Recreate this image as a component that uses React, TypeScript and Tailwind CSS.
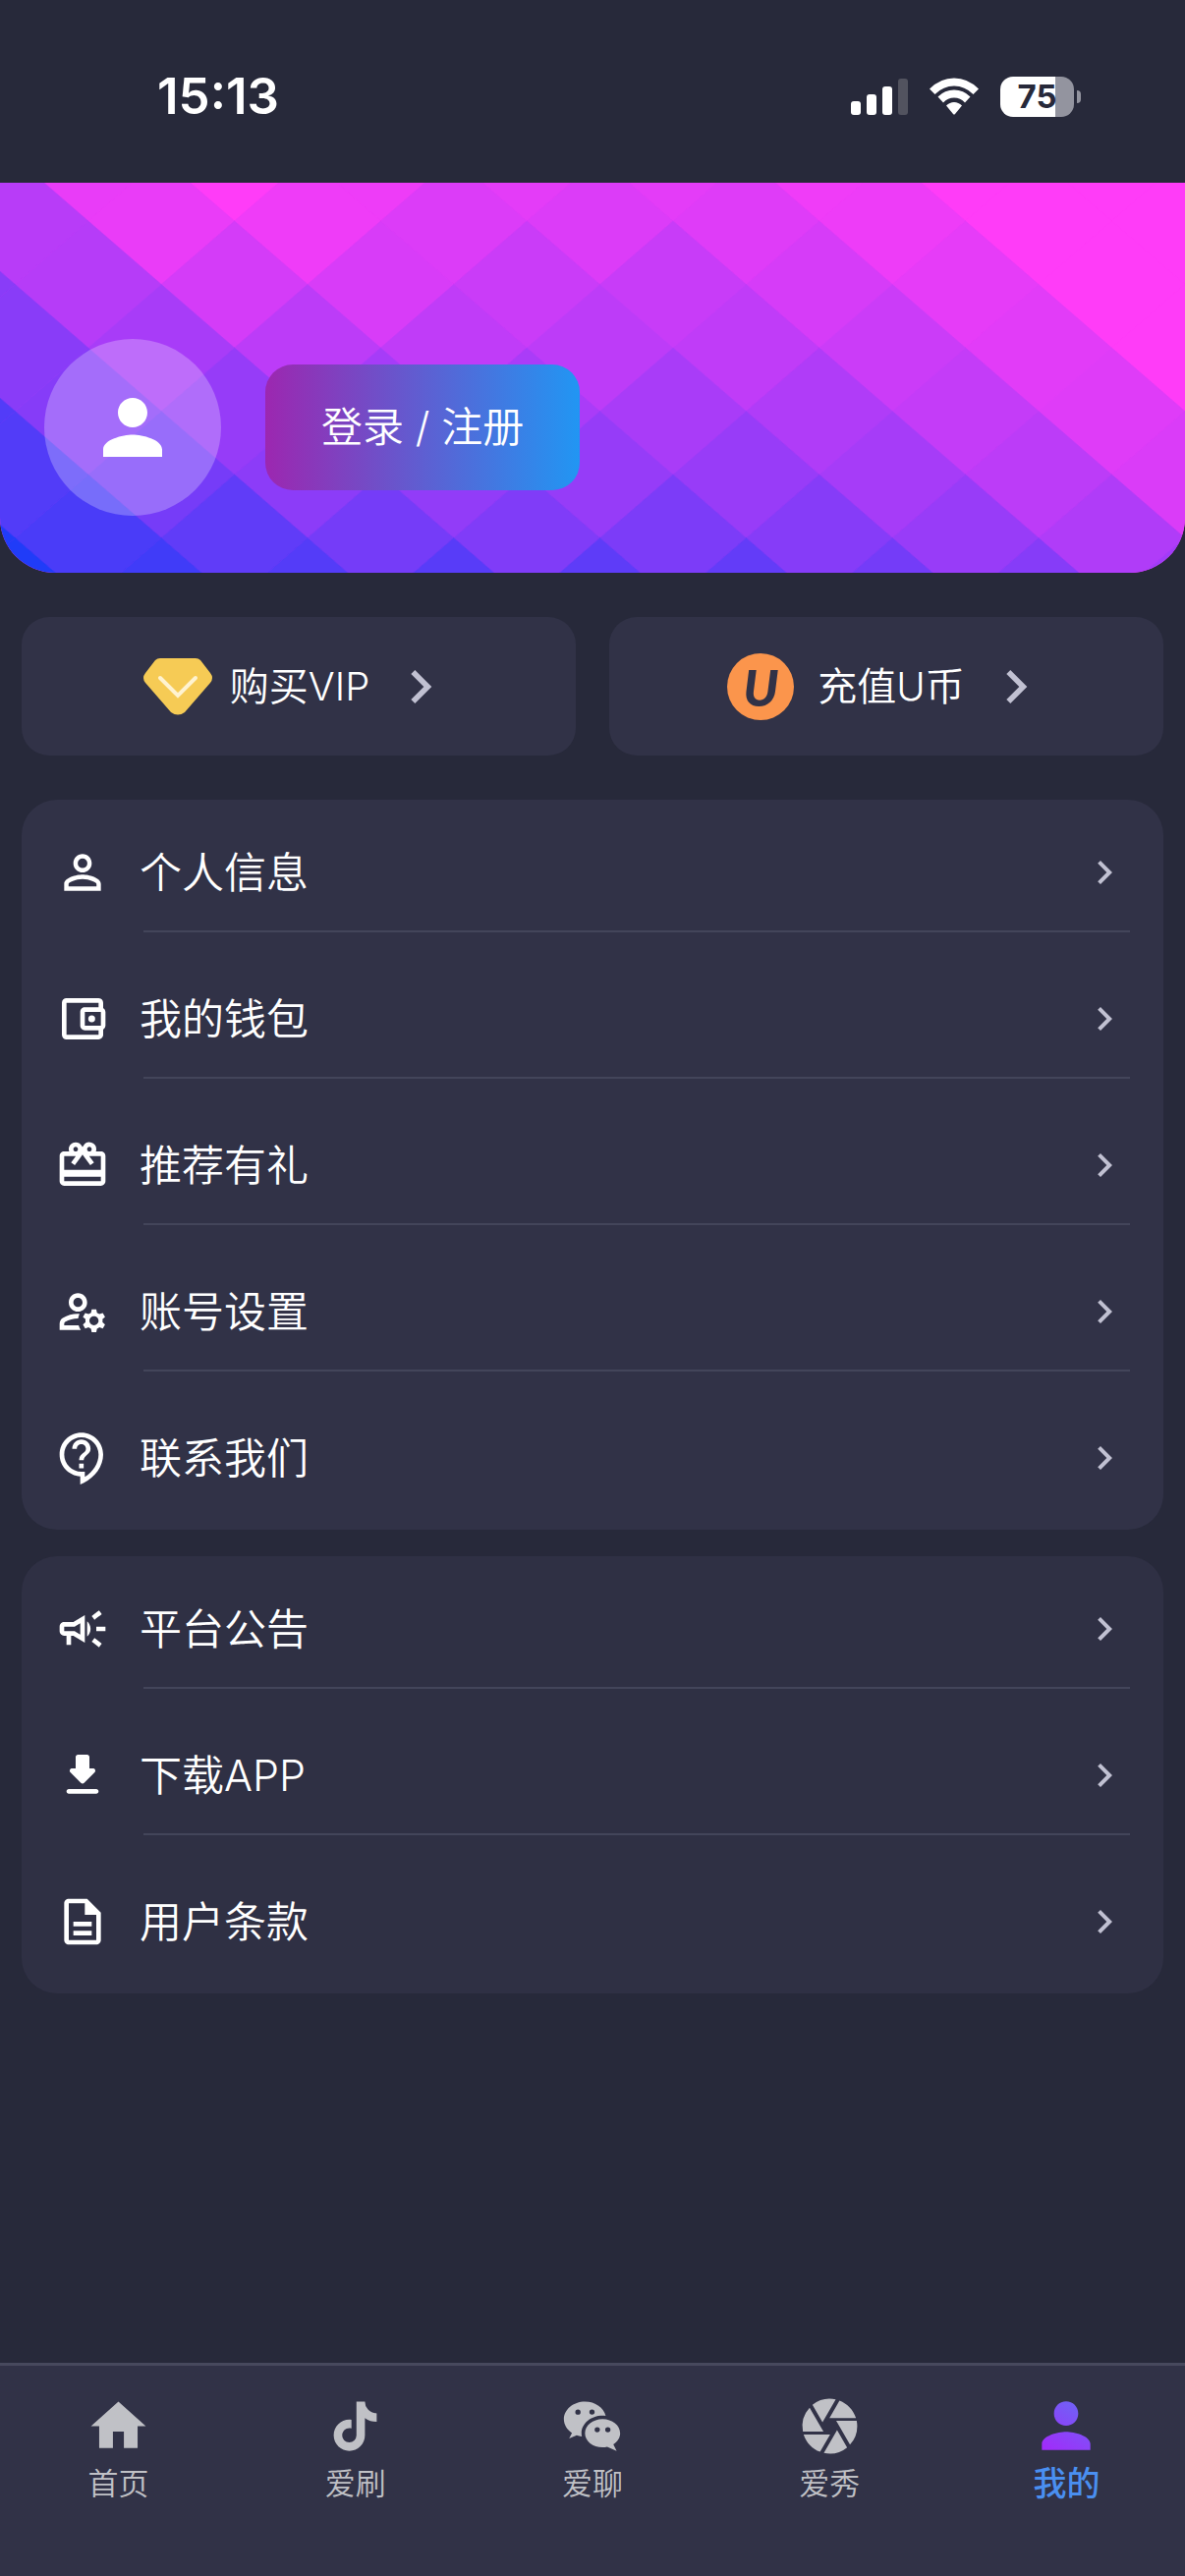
import React, { useState } from 'react';
import {
  MdCamera,
  MdChevronRight,
  MdHome,
  MdOutlineAccountBalanceWallet,
  MdOutlineCampaign,
  MdOutlineContactSupport,
  MdOutlineDescription,
  MdOutlineManageAccounts,
  MdOutlineRedeem,
  MdPerson,
  MdPersonOutline,
} from 'react-icons/md';

type IconType = React.ComponentType<{ className?: string }>;

interface MenuItem {
  label: string;
  icon: IconType;
}

const DownloadIcon: React.FC<{ className?: string }> = ({ className }) => (
  <svg viewBox="0 0 24 24" fill="currentColor" className={className}>
    <path d="M16.59 9H15V4c0-.55-.45-1-1-1h-4c-.55 0-1 .45-1 1v5H7.41c-.89 0-1.34 1.08-.71 1.71l4.59 4.59c.39.39 1.02.39 1.41 0l4.59-4.59c.63-.63.19-1.71-.7-1.71zM5 19c0 .55.45 1 1 1h12c.55 0 1-.45 1-1s-.45-1-1-1H6c-.55 0-1 .45-1 1z" />
  </svg>
);

const TiktokIcon: React.FC<{ className?: string }> = ({ className }) => (
  <svg viewBox="0 0 24 24" fill="currentColor" className={className}>
    <path d="M16.6 5.82A4.278 4.278 0 0 1 15.54 3h-3.09v12.4a2.592 2.592 0 0 1-2.59 2.5c-1.42 0-2.6-1.16-2.6-2.6 0-1.72 1.66-3.01 3.37-2.48V9.66c-3.45-.46-6.47 2.22-6.47 5.64 0 3.33 2.76 5.7 5.69 5.7 3.14 0 5.69-2.55 5.69-5.7V9.01a7.35 7.35 0 0 0 4.3 1.38V7.3s-1.88.09-3.24-1.48z" />
  </svg>
);

const WechatIcon: React.FC<{ className?: string }> = ({ className }) => (
  <svg viewBox="0 0 24 24" fill="currentColor" className={className}>
    <path d="M15.85 8.14c.39 0 .77.03 1.14.08C16.31 5.25 13.19 3 9.44 3c-4.25 0-7.7 2.88-7.7 6.43 0 2.05 1.15 3.86 2.94 5.04L3.67 16.5l2.76-1.19c.59.21 1.21.38 1.87.47-.09-.39-.14-.79-.14-1.21-.01-3.54 3.44-6.43 7.69-6.43zM12 5.89a.96.96 0 1 1 0 1.92.96.96 0 0 1 0-1.92zM6.87 7.82a.96.96 0 1 1 0-1.92.96.96 0 0 1 0 1.92z" />
    <path d="M22.26 14.57c0-2.84-2.87-5.14-6.41-5.14s-6.41 2.3-6.41 5.14 2.87 5.14 6.41 5.14c.58 0 1.14-.08 1.67-.2L20.98 21l-1.2-2.4c1.5-.94 2.48-2.38 2.48-4.03zm-8.34-.32a.96.96 0 1 1 .96-.96c.01.53-.43.96-.96.96zm3.85 0a.96.96 0 1 1 0-1.92.96.96 0 0 1 0 1.92z" />
  </svg>
);

const VipIcon: React.FC<{ className?: string }> = ({ className }) => (
  <svg viewBox="0 0 70 58" className={className}>
    <path
      d="M17 0H53Q56 0 58 2L68 15Q72 20 68 25L42 55Q35 60 28 55L2 25Q-2 20 2 15L12 2Q14 0 17 0Z"
      fill="#f6cb55"
    />
    <path d="M17 20L35 38L53 20" fill="none" stroke="#fff3d0" strokeWidth="4" strokeLinecap="round" />
  </svg>
);

// Profile tab icon with the brand gradient
const ProfileIcon: React.FC<{ className?: string }> = ({ className }) => (
  <svg viewBox="0 0 24 24" className={className}>
    <defs>
      <linearGradient id="profile-fill" gradientUnits="userSpaceOnUse" x1="6" y1="20" x2="16" y2="5">
        <stop offset="0" stopColor="#a02cfa" />
        <stop offset="1" stopColor="#7061f6" />
      </linearGradient>
    </defs>
    <path
      fill="url(#profile-fill)"
      d="M12 12c2.21 0 4-1.79 4-4s-1.79-4-4-4-4 1.79-4 4 1.79 4 4 4zm0 2c-2.67 0-8 1.34-8 4v2h16v-2c0-2.66-5.33-4-8-4z"
    />
  </svg>
);

const accountItems: MenuItem[] = [
  { label: '个人信息', icon: MdPersonOutline },
  { label: '我的钱包', icon: MdOutlineAccountBalanceWallet },
  { label: '推荐有礼', icon: MdOutlineRedeem },
  { label: '账号设置', icon: MdOutlineManageAccounts },
  { label: '联系我们', icon: MdOutlineContactSupport },
];

const platformItems: MenuItem[] = [
  { label: '平台公告', icon: MdOutlineCampaign },
  { label: '下载APP', icon: DownloadIcon },
  { label: '用户条款', icon: MdOutlineDescription },
];

const tabs: MenuItem[] = [
  { label: '首页', icon: MdHome },
  { label: '爱刷', icon: TiktokIcon },
  { label: '爱聊', icon: WechatIcon },
  { label: '爱秀', icon: MdCamera },
  { label: '我的', icon: ProfileIcon },
];

// Red channel of each diamond, row by row; odd rows are shifted by half a diamond
const diamonds = [
  [184, 233, 255, 238, 228, 228, 240, 255, 255],
  [184, 234, 239, 220, 220, 223, 238, 255, 255],
  [137, 182, 212, 216, 202, 200, 214, 230, 255],
  [137, 168, 188, 192, 189, 192, 203, 226, 255],
  [82, 134, 150, 166, 170, 169, 176, 196, 223],
  [82, 118, 140, 146, 150, 152, 166, 188, 218],
  [32, 74, 96, 117, 128, 124, 134, 152, 176],
  [32, 64, 84, 88, 94, 99, 116, 134, 160],
];

const DiamondPattern: React.FC = () => (
  <svg
    viewBox="0 0 1206 397"
    preserveAspectRatio="xMidYMid slice"
    className="absolute inset-0 w-full h-full"
    aria-hidden="true"
  >
    <rect width="1206" height="397" fill="#ff3ef8" />
    {diamonds.map((row, r) =>
      row.map((red, c) => {
        const cx = -59 + c * 148.8 + (r % 2) * 74.4;
        const cy = -25.5 + r * 64.5;
        const fill = `rgb(${red}, 60, 248)`;
        return (
          <path
            key={`${r}-${c}`}
            d={`M${cx} ${cy - 64.5}l74.4 64.5l-74.4 64.5l-74.4 -64.5z`}
            fill={fill}
            stroke={fill}
            strokeWidth="0.6"
          />
        );
      })
    )}
  </svg>
);

const StatusBar: React.FC = () => (
  <div className="flex items-center justify-between h-[186px] pt-[10px] pl-[160px] pr-[106px] font-['Inter',sans-serif]">
    <span className="text-[51px] leading-[60px] font-semibold">15:13</span>
    <div className="flex items-center gap-[22px]">
      <svg viewBox="0 0 58 38" className="w-[58px] h-[38px]">
        <rect x="0" y="24" width="10" height="14" rx="3" fill="#fff" />
        <rect x="16" y="17" width="10" height="21" rx="3" fill="#fff" />
        <rect x="32" y="9" width="10" height="29" rx="3" fill="#fff" />
        <rect x="48" y="1" width="10" height="37" rx="3" fill="#52535f" />
      </svg>
      <svg viewBox="0 0 50 38" className="w-[50px] h-[38px]" fill="#fff">
        <path d="M0 11.5Q11 .5 25 .5T50 11.5L44.5 17Q36 8.5 25 8.5T5.5 17Z" />
        <path d="M8.5 19.5Q15.5 12.5 25 12.5T41.5 19.5L36 25.5Q31.5 20.5 25 20.5T14 25.5Z" />
        <path d="M17 28.5Q20.5 25 25 25T33 28.5L26 37Q25 38.2 24 37Z" />
      </svg>
      <div className="flex items-center gap-[3px]">
        <div className="flex items-center justify-center w-[75px] h-[41px] rounded-[13px] bg-linear-to-r from-white from-75% to-[#93949f] to-75% text-[33px] leading-[41px] font-bold text-[#27293a]">
          75
        </div>
        <div className="w-[4px] h-[13px] rounded-r-full bg-[#93949f]" />
      </div>
    </div>
  </div>
);

const MenuCard: React.FC<{ items: MenuItem[]; className: string }> = ({ items, className }) => (
  <ul className={`rounded-[36px] ${className}`}>
    {items.map(({ label, icon: Icon }, index) => (
      <li key={label} className="pt-[14px] pb-[14px]">
        <button type="button" className="flex items-center w-full h-[119px] pl-[34px] pr-[36px]">
          <Icon className="w-[56px] h-[56px] shrink-0" />
          <span className="ml-[30px] text-[43px] leading-[60px]">{label}</span>
          <MdChevronRight className="w-[48px] h-[48px] ml-auto text-[#c1c1d2]" />
        </button>
        {index < items.length - 1 && <hr className="ml-[124px] mr-[34px] border-0 h-[2px] bg-[#43455a]" />}
      </li>
    ))}
  </ul>
);

const App: React.FC = () => {
  const [activeTab, setActiveTab] = useState('我的');

  return (
    <div className="flex flex-col min-h-screen bg-[#27293a] text-white font-[350] font-['Inter','Noto_Sans_CJK_SC',sans-serif]">
      <StatusBar />

      <header className="relative overflow-hidden rounded-b-[56px] pt-[159px] pb-[58px] pl-[45px]">
        <DiamondPattern />
        <div className="relative flex items-center gap-[45px]">
          <div className="flex items-center justify-center w-[180px] h-[180px] rounded-full bg-white/25">
            <MdPerson className="w-[90px] h-[90px]" />
          </div>
          <button
            type="button"
            className="h-[128px] px-[57px] rounded-[28px] bg-linear-to-r/srgb from-[#9c27b0] to-[#2196f3] text-[42px] leading-[60px]"
          >
            登录 / 注册
          </button>
        </div>
      </header>

      <main className="flex flex-col px-[22px] pt-[45px]">
        <div className="grid grid-cols-2 gap-[34px]">
          <button type="button" className="flex items-center justify-center h-[141px] rounded-[28px] bg-[#313247]">
            <VipIcon className="w-[70px] h-[58px]" />
            <span className="ml-[18px] text-[40px] leading-[60px]">购买VIP</span>
            <MdChevronRight className="w-[68px] h-[68px] ml-[18px] text-[#c1c1d2]" />
          </button>
          <button type="button" className="flex items-center justify-center h-[141px] pl-[4px] rounded-[28px] bg-[#313247]">
            <span className="flex items-center justify-center w-[68px] h-[68px] rounded-full bg-[#fb954c] font-['Lato',sans-serif] text-[52px] leading-[60px] font-black italic text-[#313247]">
              U
            </span>
            <span className="ml-[24px] text-[40px] leading-[60px]">充值U币</span>
            <MdChevronRight className="w-[68px] h-[68px] ml-[18px] text-[#c1c1d2]" />
          </button>
        </div>

        <MenuCard items={accountItems} className="mt-[45px] bg-[#313247]" />
        <MenuCard items={platformItems} className="mt-[27px] bg-[#2f3044]" />
      </main>

      <nav className="grid grid-cols-5 mt-auto h-[217px] pt-[28px] border-t-[3px] border-[#47495d] bg-[#313247]">
        {tabs.map(({ label, icon: Icon }) => {
          const active = label === activeTab;
          return (
            <button
              key={label}
              type="button"
              onClick={() => setActiveTab(label)}
              className={`flex flex-col items-center self-start ${active ? 'text-[#4a8ff0]' : 'text-[#c0c1c6]'}`}
            >
              <span className="flex items-center justify-center h-[66px]">
                <Icon className={active ? 'w-[74px] h-[74px]' : 'w-[67px] h-[67px]'} />
              </span>
              <span className={active ? 'text-[34px] leading-[52px] font-medium' : 'text-[31px] leading-[52px]'}>
                {label}
              </span>
            </button>
          );
        })}
      </nav>
    </div>
  );
};

export default App;
